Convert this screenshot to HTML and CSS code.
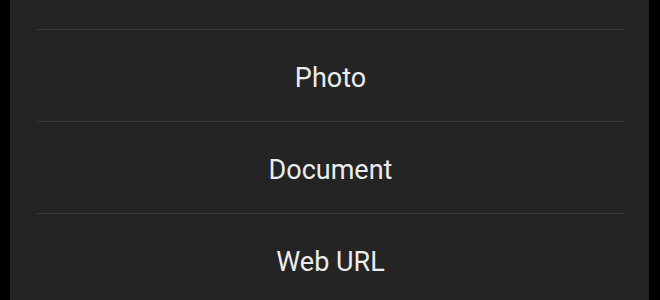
FILE: index.html
```html
<!DOCTYPE html>
<html>
<head>
<meta charset="utf-8">
<link rel="stylesheet" href="styles.css">
</head>
<body>
<div class="screen">
  <div class="sheet">
    <ul class="options">
      <li class="option option-top"></li>
      <li class="option">Photo</li>
      <li class="option">Document</li>
      <li class="option">Web URL</li>
    </ul>
  </div>
</div>
</body>
</html>
```

FILE: styles.css
```css
html, body {
  margin: 0;
  padding: 0;
  background: #000;
  height: 100%;
  overflow: hidden;
}
.screen {
  display: flex;
  height: 300px;
  padding: 0 11px 0 10px;
}
.sheet {
  flex: 1;
  background: #242424;
  padding: 0 25px 0 27px;
}
.options {
  list-style: none;
  margin: 0;
  padding: 0;
}
.option {
  height: 86px;
  padding-top: 5px;
  display: flex;
  align-items: center;
  justify-content: center;
  border-bottom: 1px solid #383838;
  font-family: Roboto, "Liberation Sans", sans-serif;
  font-size: 27px;
  color: #ececec;
  box-sizing: content-box;
}
.option-top {
  height: 29px;
  padding-top: 0;
}
```
